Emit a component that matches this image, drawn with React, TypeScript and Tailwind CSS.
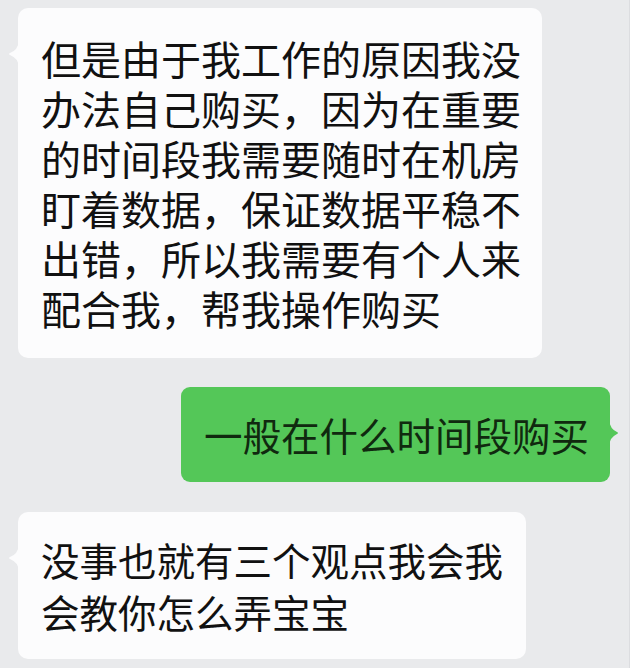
const cjk = "font-['Noto_Sans_CJK_SC','Noto_Sans',sans-serif]";

const TailLeft = () => (
  <svg className="absolute -left-[10px] top-[33px]" width="11" height="26" viewBox="0 0 11 26">
    <path d="M11 0 Q10 9 2 12 Q0 13 2 14 Q10 17 11 26 Z" fill="#fcfcfd" />
  </svg>
);

const TailRight = () => (
  <svg className="absolute -right-[9px] top-[33px]" width="10" height="26" viewBox="0 0 10 26">
    <path d="M0 0 Q1 9 8 12 Q10 13 8 14 Q1 17 0 26 Z" fill="#54c758" />
  </svg>
);

const incoming = [
  "但是由于我工作的原因我没",
  "办法自己购买，因为在重要",
  "的时间段我需要随时在机房",
  "盯着数据，保证数据平稳不",
  "出错，所以我需要有个人来",
  "配合我，帮我操作购买",
];

const reply = ["没事也就有三个观点我会我", "会教你怎么弄宝宝"];

export default function App() {
  return (
    <div className={`${cjk} w-[630px] h-[668px] bg-[#e9eaec] border-r border-[#dcdde0] flex flex-col gap-[29px] pt-[8px] pl-[18px] overflow-hidden`}>
      {/* incoming message */}
      <div className="relative w-[524px] rounded-[10px] bg-[#fcfcfd] pl-[23px] py-[30px] flex flex-col gap-[10px] text-[40px] leading-[40px] text-[#111]">
        <TailLeft />
        {incoming.map((line) => (
          <div key={line} className="whitespace-nowrap">{line}</div>
        ))}
      </div>

      {/* my message */}
      <div className="relative self-start ml-[163px] w-[429px] rounded-[9px] bg-[#54c758] pl-[23px] py-[28px] text-[38.5px] leading-[39px] text-[#10290f]">
        <TailRight />
        <div className="whitespace-nowrap">一般在什么时间段购买</div>
      </div>

      {/* incoming message */}
      <div className="relative w-[508px] mt-[1px] rounded-[10px] bg-[#fcfcfd] pl-[23px] py-[28px] flex flex-col gap-[13px] text-[38.5px] leading-[39px] text-[#111]">
        <TailLeft />
        {reply.map((line) => (
          <div key={line} className="whitespace-nowrap">{line}</div>
        ))}
      </div>
    </div>
  );
}
